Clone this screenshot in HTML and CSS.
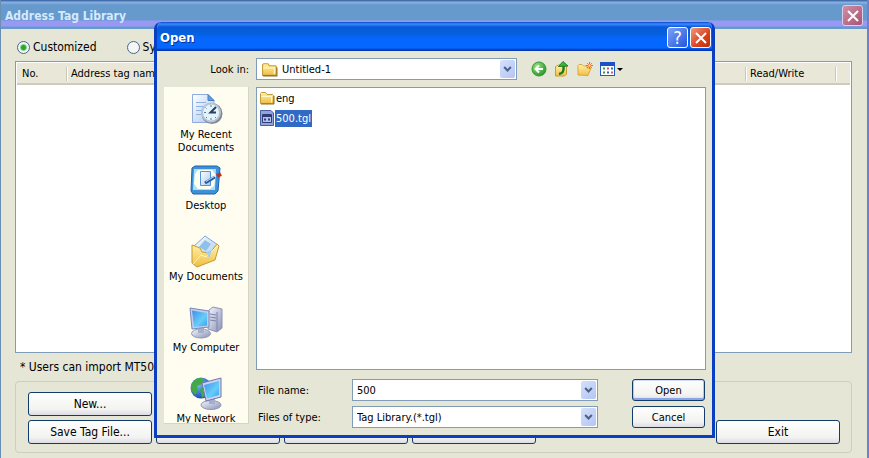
FILE: index.html
```html
<!DOCTYPE html>
<html lang="en">
<head>
<meta charset="utf-8">
<title>Address Tag Library</title>
<link rel="stylesheet" href="styles.css">
</head>
<body>
<svg class="defs" aria-hidden="true">
  <defs>
    <linearGradient id="gold" x1="0" y1="0" x2="0" y2="1"><stop offset="0" stop-color="#fff3a8"/><stop offset="1" stop-color="#f0bd45"/></linearGradient>
    <linearGradient id="paper" x1="0" y1="0" x2="1" y2="1"><stop offset="0" stop-color="#fff"/><stop offset="1" stop-color="#a9c6f0"/></linearGradient>
    <linearGradient id="screen" x1="0" y1="0" x2="1" y2="1"><stop offset="0" stop-color="#3f8fe8"/><stop offset=".6" stop-color="#66cdfa"/><stop offset="1" stop-color="#3aa0ee"/></linearGradient>
    <linearGradient id="metal" x1="0" y1="0" x2="1" y2="1"><stop offset="0" stop-color="#f6f8ff"/><stop offset="1" stop-color="#8890b4"/></linearGradient>
    <radialGradient id="leaf" cx=".35" cy=".3" r=".8"><stop offset="0" stop-color="#9be27c"/><stop offset="1" stop-color="#1f8f25"/></radialGradient>
    <radialGradient id="sea" cx=".35" cy=".3" r=".8"><stop offset="0" stop-color="#7fc0ff"/><stop offset="1" stop-color="#0a3fae"/></radialGradient>
    <symbol id="folder" viewBox="0 0 16 16">
      <path d="M1.5 13.5V3.500L2.500 2.500H6.500L8 4.500H13.500L14.500 5.500V13.500Z" fill="url(#gold)" stroke="#c39a35"/>
      <path d="M2 6.500H12.500V12.500" fill="none" stroke="#fff8cc"/>
      <path d="M2 14H15V6" fill="none" stroke="#8d6d24"/>
    </symbol>
    <symbol id="chevron" viewBox="0 0 15 19"><path d="M4 7.500L7.500 11L11 7.500" fill="none" stroke="#4d6185" stroke-width="2.200"/></symbol>
    <symbol id="cross" viewBox="0 0 16 16"><path d="M3 3L13 13M13 3L3 13" stroke="#fff" stroke-width="2"/></symbol>
  </defs>
</svg>

<main class="window">
  <header class="window-title">
    <h1>Address Tag Library</h1>
    <button class="caption-button faded" aria-label="Close"><svg><use href="#cross"/></svg></button>
  </header>
  <div class="window-body">
    <div class="modes">
      <label class="mode"><input type="radio" name="mode" checked>Customized</label>
      <label class="mode"><input type="radio" name="mode">Sy</label>
    </div>
    <div class="table-frame">
      <table class="tags">
        <thead><tr><th class="col-no">No.</th><th>Address tag name</th><th class="col-rw">Read/Write</th><th class="col-end"></th></tr></thead>
      </table>
    </div>
    <p class="note">* Users can import MT50</p>
    <div class="actions">
      <div class="action-row"><button class="button">New...</button></div>
      <div class="action-row">
        <button class="button">Save Tag File...</button>
        <button class="button"></button>
        <button class="button"></button>
        <button class="button"></button>
        <button class="button exit">Exit</button>
      </div>
    </div>
  </div>
</main>

<section class="dialog" role="dialog" aria-labelledby="dialog-title">
  <header class="dialog-title">
    <h2 id="dialog-title">Open</h2>
    <button class="caption-button help" aria-label="Help">?</button>
    <button class="caption-button close" aria-label="Close"><svg><use href="#cross"/></svg></button>
  </header>
  <div class="dialog-body">
    <div class="look-row">
      <label for="look">Look in:</label>
      <div class="combo with-icon">
        <svg class="combo-icon"><use href="#folder"/></svg>
        <select id="look"><option>Untitled-1</option></select>
        <span class="arrow"><svg><use href="#chevron"/></svg></span>
      </div>
      <div class="tools">
        <button aria-label="Back"><svg viewBox="0 0 16 16"><circle cx="8" cy="8" r="7" fill="url(#leaf)" stroke="#2f9a35"/><path d="M12 8H5M8 4.500L4.500 8L8 11.500" fill="none" stroke="#fff" stroke-width="2"/></svg></button>
        <button aria-label="Up one level"><svg viewBox="0 0 16 16"><path d="M1.500 15V5.500L4.500 4H8L12.500 5.500V13L10.500 15Z" fill="url(#gold)" stroke="#c99a35"/><path d="M5 13Q10.500 12.500 9.500 5" fill="none" stroke="#1c7d20" stroke-width="2.500"/><path d="M4.500 5.500L9 .5L14 5Z" fill="#3fb53f" stroke="#1c7d20"/></svg></button>
        <button aria-label="New folder"><svg viewBox="0 0 16 16"><path d="M1 14V4.500L2 3.500H5L6.500 5H10V7H14L11 14.500Z" fill="url(#gold)" stroke="#dda543"/><path d="M12.500 1V8M9 4.500H16M10.200 2.200L14.800 6.800M14.800 2.200L10.200 6.800" stroke="#f0662c"/><circle cx="12.500" cy="4.500" r="1.200" fill="#ffe08a"/></svg></button>
        <button class="views" aria-label="Views"><svg viewBox="0 0 23 16"><rect x=".5" y="1.500" width="14" height="13" fill="#fff" stroke="#245ac5"/><path d="M0 3H15" stroke="#1d52c4" stroke-width="4"/><path d="M3 7.500H5M3 11.500H5" stroke="#4b8f4b" stroke-width="2"/><path d="M7 7.500H9M11 11.500H13" stroke="#c25b78" stroke-width="2"/><path d="M11 7.500H13M7 11.500H9" stroke="#3e62a8" stroke-width="2"/><path d="M17 7H23L20 10Z" fill="#000"/></svg></button>
      </div>
    </div>
    <div class="browse">
      <nav class="places">
        <a href="#recent"><svg viewBox="0 0 34 34"><path d="M3.500 2.500H19L25 8.500V30.500H3.500Z" fill="url(#paper)" stroke="#8fabdc"/><path d="M19 2.500V8.500H25Z" fill="#5f9fe5" stroke="#4a7fc4"/><path d="M7 10.500H17M7 14.500H15M7 18.500H13M7 22.500H12" stroke="#8fb2e6"/><circle cx="23" cy="21.500" r="10.500" fill="#7d8798"/><circle cx="22" cy="20.500" r="9" fill="#e3f3fb" stroke="#b7c3d0" stroke-width="2"/><path d="M27 15L21.500 20.500H27" fill="none" stroke="#28435f" stroke-width="2"/><path d="M22 13V15M15 20.500H17M22 26V28M16.500 15.500L17.500 16.500M17 26L18 25M27 26L26 25" stroke="#4d82ad"/></svg>My Recent<br>Documents</a>
        <a href="#desktop"><svg viewBox="0 0 34 34"><path d="M3 5L6 3H28L31 5L29 28L26 31H4L2 28Z" fill="#3c91d8" stroke="#1d64ac"/><path d="M5 6H27L26 27H4Z" fill="#a8e0fc"/><path d="M9 7H23L27 12L25 23L21 26H9L5 21L6 11Z" fill="#fffff0"/><path d="M11.500 8.500H21.500V22.500H11.500Z" fill="url(#paper)" stroke="#4f94db"/><path d="M16 20L26 14" stroke="#265c9f" stroke-width="3"/><path d="M17 18.500L27 12.500" stroke="#b8dcff"/><path d="M28 13L32 11" stroke="#b6322b" stroke-width="4"/></svg>Desktop</a>
        <a href="#documents"><svg viewBox="0 0 34 34"><path d="M4 13L16 2L29 11L22 25L7 23Z" fill="url(#paper)" stroke="#7fa8d3"/><path d="M10 13L16 6L22 10L17 17Z" fill="#8bc1ea"/><path d="M3 11L11 14L13 18L21 19L28 10L30 12L26 26L8 33L3 29Z" fill="url(#gold)" stroke="#c39a37"/><path d="M4 30L12 21L17 23L27 13" fill="none" stroke="#fff6b0"/><path d="M17 18L23 16L20 24Z" fill="#9ed0f0"/></svg>My Documents</a>
        <a href="#computer"><svg viewBox="0 0 34 34"><path d="M20 5L24 2L33 4V23L28 27L19 24Z" fill="url(#metal)" stroke="#8c94b8"/><path d="M28 7V26M21 9L27 10M21 12L27 13M21 15L27 16" stroke="#7a82aa"/><ellipse cx="12" cy="28.500" rx="9.500" ry="4.500" fill="url(#metal)" stroke="#9098ba"/><path d="M9 22H15V28H9Z" fill="#a5aeca"/><path d="M1 3L20 6V22L3 24Z" fill="#c3ccec" stroke="#7d88b6"/><path d="M3 5.500L18 8V20.500L5 22Z" fill="url(#screen)"/></svg>My Computer</a>
        <a href="#network"><svg viewBox="0 0 34 34"><circle cx="12" cy="12" r="10.500" fill="url(#sea)"/><path d="M3 7Q8 0 15 3L13 8L8 10L9 15L6 19Q0 13 3 7ZM11 13L16 10L18 18L13 22Z" fill="#43a847"/><ellipse cx="22" cy="29" rx="10" ry="4.500" fill="url(#metal)" stroke="#9098ba"/><path d="M20 22H26V28H20Z" fill="#a5aeca"/><path d="M13 7L32 2V21L17 25Z" fill="#cbd3ee" stroke="#6d79ac"/><path d="M15 9L30 5V19L18 22.500Z" fill="url(#screen)"/></svg>My Network</a>
      </nav>
      <div class="pane">
        <ul class="files">
          <li><svg><use href="#folder"/></svg><span>eng</span></li>
          <li class="selected"><svg viewBox="0 0 16 16"><path d="M1.500 .5H12L14.500 3V15.500H1.500Z" fill="#8fa6dd" stroke="#4a5d9f"/><path d="M3.500 4.500H12.500V12.500H3.500Z" fill="#b4c2ea" stroke="#303d77"/><path d="M4 6H12" stroke="#303d77" stroke-width="2"/><path d="M5 9.500H7M9 9.500H11" stroke="#303d77" stroke-width="2"/></svg><span>500.tgl</span></li>
        </ul>
        <form class="fields">
          <label for="name">File name:</label>
          <div class="combo"><input id="name" type="text" value="500"><button type="button" class="arrow" aria-label="Recent names"><svg><use href="#chevron"/></svg></button></div>
          <button type="button" class="button default">Open</button>
          <label for="type">Files of type:</label>
          <div class="combo"><select id="type"><option>Tag Library.(*.tgl)</option></select><span class="arrow"><svg><use href="#chevron"/></svg></span></div>
          <button type="button" class="button">Cancel</button>
        </form>
      </div>
    </div>
  </div>
</section>
</body>
</html>
```

FILE: styles.css
```css
* { box-sizing: border-box; }

html, body { height: 100%; }

body {
  margin: 0;
  overflow: hidden;
  color: #000;
  background: #e5e6d6;
  font-family: "DejaVu Sans Condensed", "DejaVu Sans", sans-serif;
  font-size: 12px;
}

h1, h2, p, ul { margin: 0; padding: 0; }
button, input, select { font: inherit; color: inherit; margin: 0; }
.defs { position: absolute; width: 0; height: 0; }

/* Main window */
.window {
  min-height: 100%;
  display: flex;
  flex-direction: column;
  border-left: 1px solid #6a8fb5;
  border-right: 2px solid #6c82cf;
}

.window-title {
  height: 29px;
  padding: 5px 4px 0 4px;
  display: flex;
  justify-content: space-between;
  background: linear-gradient(#4470ae 0 1px, #8fb4e4 2px, #6699cc 5px 20px, #9999f5 21px 26px, #6699cc 27px);
}

.window-title h1 {
  color: #d3eaff;
  font-size: 12px;
  line-height: 22px;
}

.caption-button {
  width: 21px;
  height: 21px;
  padding: 0;
  display: grid;
  place-items: center;
  border: 1px solid #fff;
  border-radius: 3px;
  color: #fff;
}
.caption-button svg { width: 16px; height: 16px; }
.caption-button.faded { border-color: #d9cfea; background: linear-gradient(135deg, #cf8fa5, #a85472); }
.caption-button.help { background: linear-gradient(135deg, #7da0fa, #2356dc); font-size: 18px; line-height: 18px; }
.caption-button.close { background: linear-gradient(135deg, #f09a80, #d8431c 60%, #b8300c); }

.window-body {
  flex: 1;
  display: flex;
  flex-direction: column;
  padding: 9px 15px 5px 14px;
}

.modes { display: flex; gap: 30px; padding-left: 2px; height: 23px; }
.mode { display: flex; align-items: center; height: 18px; gap: 3px; }
.mode input {
  appearance: none;
  width: 13px;
  height: 13px;
  border: 1px solid #47688c;
  border-radius: 50%;
  background: #f5f6f3;
}
.mode input:checked { background: radial-gradient(#2aa82a 0 2px, #f5f6f3 4px); }

.table-frame { flex: 1; border: 1px solid #7f9db9; background: #fff; padding: 1px; }
.tags { width: 100%; border-collapse: collapse; table-layout: fixed; }
.tags th {
  height: 21px;
  padding: 0 5px;
  text-align: left;
  font-size: 11px;
  font-weight: normal;
  background: linear-gradient(90deg, #c9c7b8 1px, #fff 1px 2px, transparent 2px) 0 4px / 100% 14px no-repeat, #e9e8d8;
  border-bottom: 2px solid #cfcabb;
}
.tags .col-no { width: 49px; background: #e9e8d8; }
.tags .col-rw { width: 90px; }
.tags .col-end { width: 15px; padding: 0; }

.note { padding-left: 5px; line-height: 28px; }

.actions {
  height: 72px;
  padding: 10px 11px 8px 12px;
  display: flex;
  flex-direction: column;
  gap: 4px;
  border: 1px solid #cdcebe;
  border-radius: 4px;
}
.action-row { display: flex; gap: 4px; }

.button {
  width: 124px;
  height: 24px;
  padding: 0;
  border: 1px solid #123c6c;
  border-radius: 3px;
  background: linear-gradient(#fff, #f2f2f0 75%, #dcdce6);
}
.button.exit { margin-left: auto; }
.button.default { box-shadow: inset 0 1px #cddcff, inset 0 -2px #8aa4e4, inset 1px 0 #b4c8f5, inset -1px 0 #b4c8f5; }

/* File dialog */
.dialog {
  position: absolute;
  inset: 22px 154px 20px;
  display: flex;
  flex-direction: column;
  border: solid #0a3fc4;
  border-width: 0 3px 3px;
  border-radius: 7px 7px 0 0;
  background: #e5e6d6;
  font-size: 11px;
  overflow: hidden;
}

.dialog-title {
  height: 29px;
  padding: 5px 1px 0 3px;
  display: flex;
  gap: 2px;
  background: linear-gradient(#0a44c8, #3b8bff 2px, #0759d8 5px, #0562e0 13px, #0667ff 16px 26px, #0038b0 28px);
}
.dialog-title h2 {
  flex: 1;
  color: #fff;
  font-size: 13px;
  line-height: 22px;
  text-shadow: 1px 1px #0a2f90;
}

.dialog-body { flex: 1; min-height: 0; padding: 7px 6px 7px 7px; display: flex; flex-direction: column; gap: 7px; }

.look-row { display: grid; grid-template-columns: 85px 261fr 182fr; column-gap: 7px; align-items: center; }
.look-row label { text-align: right; }

.combo { position: relative; height: 22px; }
.combo select, .combo input {
  appearance: none;
  width: 100%;
  height: 100%;
  padding: 0 20px 0 4px;
  border: 1px solid #7f9db9;
  border-radius: 0;
  background: #fff;
  outline: 0;
}
.combo.with-icon select { padding-left: 25px; }
.combo-icon { position: absolute; left: 5px; top: 3px; width: 17px; height: 17px; }
.arrow {
  position: absolute;
  top: 2px;
  right: 2px;
  bottom: 2px;
  width: 15px;
  padding: 0;
  border: 0;
  border-radius: 2px;
  background: linear-gradient(135deg, #d5e0fb, #b3c5f5);
  pointer-events: none;
}
.arrow svg { display: block; width: 15px; height: 18px; }

.tools { display: flex; gap: 7px; padding-left: 7px; }
.tools button { padding: 0; border: 0; background: none; }
.tools svg { display: block; width: 16px; height: 16px; }
.tools .views svg { width: 23px; }

.browse { flex: 1; min-height: 0; display: flex; gap: 7px; }

.places {
  width: 85px;
  margin-bottom: 4px;
  overflow: hidden;
  background: #fffcf0;
  border: solid #d6d5c4;
  border-width: 0 1px 1px 0;
}
.places a {
  height: 71px;
  padding-top: 5px;
  display: block;
  color: #000;
  line-height: 13px;
  text-align: center;
  text-decoration: none;
}
.places svg { display: block; width: 34px; height: 34px; margin: 0 auto 2px; }

.pane { flex: 1; min-width: 0; display: flex; flex-direction: column; gap: 9px; }

.files {
  flex: 1;
  list-style: none;
  background: #fff;
  border: 1px solid #7f9db9;
}
.files li { display: flex; align-items: center; height: 20px; padding-left: 2px; }
.files svg { width: 16px; height: 16px; }
.files span { padding: 0 1px; line-height: 17px; }
.files .selected span { color: #fff; background: #316ac5; }

.fields {
  display: grid;
  grid-template-columns: 94px 246fr 107fr;
  row-gap: 5px;
  align-items: center;
  padding: 0 1px 0 2px;
}
.fields .button { width: 73px; height: 22px; justify-self: end; }
```
